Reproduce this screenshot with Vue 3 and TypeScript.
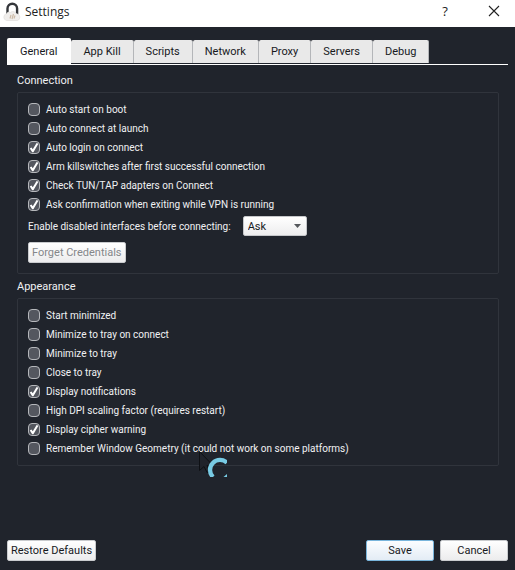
<script setup lang="ts">
import { ref } from 'vue'

interface Option {
  id: string
  label: string
  checked: boolean
}

const tabs = ['General', 'App Kill', 'Scripts', 'Network', 'Proxy', 'Servers', 'Debug']
const activeTab = ref('General')

const connection = ref<Option[]>([
  { id: 'boot', label: 'Auto start on boot', checked: false },
  { id: 'launch', label: 'Auto connect at launch', checked: false },
  { id: 'login', label: 'Auto login on connect', checked: true },
  { id: 'arm', label: 'Arm killswitches after first successful connection', checked: true },
  { id: 'tun', label: 'Check TUN/TAP adapters on Connect', checked: true },
  { id: 'ask', label: 'Ask confirmation when exiting while VPN is running', checked: true },
])

const appearance = ref<Option[]>([
  { id: 'start-min', label: 'Start minimized', checked: false },
  { id: 'tray-connect', label: 'Minimize to tray on connect', checked: false },
  { id: 'tray', label: 'Minimize to tray', checked: false },
  { id: 'close-tray', label: 'Close to tray', checked: false },
  { id: 'notify', label: 'Display notifications', checked: true },
  { id: 'dpi', label: 'High DPI scaling factor (requires restart)', checked: false },
  { id: 'cipher', label: 'Display cipher warning', checked: true },
  { id: 'geometry', label: 'Remember Window Geometry (it could not work on some platforms)', checked: false },
])

const interfaceMode = ref('Ask')
</script>

<template>
  <div class="window">
    <header class="titlebar">
      <svg class="logo" viewBox="0 0 18 20" aria-hidden="true">
        <path d="M4.500 14V7.500a4.800 4.800 0 0 1 9.600 0V14" fill="none" stroke="#34363a" stroke-width="2.400" />
        <path d="M3.500 19.500a3.500 3.500 0 0 1 0-6.800c.8-1.500 2.600-2 3.800-1.200 2-1.600 5.200-1 6.200 1.300a3.400 3.400 0 0 1 .8 6.700Z" fill="#f0eeec" stroke="#dedcda" stroke-width=".6" />
        <path d="M7 17.500l1-3.500M9 18l1.500-5M11 17.500l1-3" stroke="#cdbba8" stroke-width="1.200" />
      </svg>
      <h1>Settings</h1>
      <button class="caption help" type="button" aria-label="Help">?</button>
      <button class="caption" type="button" aria-label="Close">
        <svg class="cross" viewBox="0 0 12 12"><path d="M1 1l10 10M11 1L1 11" stroke="#222" stroke-width="1.100" /></svg>
      </button>
    </header>

    <main>
      <nav class="tabs" role="tablist">
        <button
          v-for="tab in tabs"
          :key="tab"
          type="button"
          role="tab"
          class="tab"
          :class="{ active: tab === activeTab }"
          :aria-selected="tab === activeTab"
          @click="activeTab = tab"
        >{{ tab }}</button>
      </nav>

      <div class="panel">
        <section>
          <h2>Connection</h2>
          <div class="group">
            <label v-for="o in connection" :key="o.id" class="option">
              <input v-model="o.checked" type="checkbox" />
              <span>{{ o.label }}</span>
            </label>
            <div class="field">
              <label for="mode">Enable disabled interfaces before connecting:</label>
              <div class="combo">
                <select id="mode" v-model="interfaceMode">
                  <option>Ask</option>
                  <option>Enable</option>
                  <option>Ignore</option>
                </select>
                <svg class="arrow" viewBox="0 0 7 4" aria-hidden="true"><path d="M0 0h7L3.500 4Z" fill="#55585c" /></svg>
              </div>
            </div>
            <button class="push" type="button" disabled>Forget Credentials</button>
          </div>
        </section>

        <section>
          <h2>Appearance</h2>
          <div class="group appearance">
            <label v-for="o in appearance" :key="o.id" class="option">
              <input v-model="o.checked" type="checkbox" />
              <span>{{ o.label }}</span>
            </label>
            <svg class="pointer" viewBox="0 0 29 29" aria-hidden="true">
              <path d="M1.500 3.500v19l4.500-4 3 6 3-1-3-6h6Z" fill="#20232b" stroke="#0e1014" />
              <path d="M29 14.800A9.600 9.600 0 1 0 15 29" fill="none" stroke="#78cbe4" stroke-width="4.300" />
              <path d="M25.500 29L29 26V29Z" fill="#78cbe4" />
            </svg>
          </div>
        </section>
      </div>
    </main>

    <footer>
      <button class="push restore" type="button">Restore Defaults</button>
      <button class="push wide save" type="button">Save</button>
      <button class="push wide" type="button">Cancel</button>
    </footer>
  </div>
</template>

<style>
body {
  background: #20242c;
}
</style>

<style scoped>
.window {
  display: flex;
  flex-direction: column;
  box-sizing: border-box;
  min-height: 100vh;
  background: #20242c;
  color: #f0f1f3;
  font-family: Roboto, "Liberation Sans", sans-serif;
  font-size: 10px;
}

button,
select {
  font-family: inherit;
  margin: 0;
}

h1,
h2 {
  margin: 0;
  font-weight: 400;
}

.titlebar {
  display: flex;
  align-items: center;
  height: 27px;
  padding: 0 5px 0 3px;
  background: #fff;
  color: #222;
}

.logo {
  width: 18px;
  height: 20px;
  margin: 0 4px 5px 0;
}

h1 {
  flex: 1;
  padding-bottom: 3px;
  font-family: "Open Sans", sans-serif;
  font-size: 12px;
  line-height: 20px;
}

.caption {
  display: flex;
  align-items: center;
  justify-content: center;
  width: 32px;
  height: 24px;
  margin-bottom: 5px;
  padding: 0;
  border: 0;
  background: none;
  color: #222;
}

.help {
  margin-right: 17px;
  font-family: "Open Sans", sans-serif;
  font-size: 13px;
}

.cross {
  width: 12px;
  height: 12px;
}

main {
  flex: 1;
  padding: 11px 7px 0;
}

.tabs {
  display: flex;
  align-items: flex-end;
  height: 26px;
  border-bottom: 1px solid #fff;
}

.tab {
  height: 23px;
  margin-bottom: 1px;
  padding: 0 12px;
  border: 0;
  border-right: 1px solid #b4b6b9;
  border-radius: 2px 2px 0 0;
  background: #e9e9e9;
  color: #17191d;
  font-size: 11px;
  line-height: 24px;
}

.tab.active {
  height: 26px;
  margin-bottom: 0;
  padding: 0 13px;
  border-right-color: #fff;
  background: #fff;
  line-height: 27px;
}

.panel {
  display: flex;
  flex-direction: column;
  gap: 4px;
  padding: 7px 9px 0 10px;
}

h2 {
  height: 20px;
  font-size: 11px;
  line-height: 18px;
}

.group {
  position: relative;
  padding: 7px 10px 10px;
  border: 1px solid #30343c;
  border-radius: 2px;
}

.appearance {
  padding-bottom: 7px;
}

.option {
  display: flex;
  align-items: center;
  gap: 6px;
  height: 19px;
}

.option input {
  position: relative;
  appearance: none;
  box-sizing: border-box;
  width: 12px;
  height: 13px;
  margin: 0;
  border: 1px solid #b5b7bb;
  border-radius: 4px;
  background: #54575f;
}

.option input:checked::after {
  content: "";
  position: absolute;
  inset: 0;
  background: #fff;
  clip-path: polygon(8% 60%, 24% 50%, 38% 67%, 76% 8%, 94% 16%, 44% 94%, 32% 94%);
}

.field {
  display: flex;
  align-items: center;
  gap: 12px;
  margin: 2px 0 6px;
}

.combo {
  position: relative;
}

select {
  appearance: none;
  box-sizing: border-box;
  width: 64px;
  height: 20px;
  padding: 0 4px;
  border: 1px solid #c5c7ca;
  border-radius: 2px;
  background: linear-gradient(#fff, #ededee);
  color: #17191d;
  font-size: 11px;
}

.arrow {
  position: absolute;
  right: 6px;
  top: 8px;
  width: 7px;
  height: 4px;
}

.push {
  box-sizing: border-box;
  height: 21px;
  padding: 0 3px;
  border: 1px solid #c9cbce;
  border-radius: 2px;
  background: linear-gradient(#fff, #ececed);
  color: #17191d;
  font-size: 11px;
  line-height: 19px;
}

.push:disabled {
  color: #85878a;
  display: block;
}

.pointer {
  position: absolute;
  left: 180px;
  bottom: -12px;
  width: 29px;
  height: 29px;
  overflow: hidden;
}

footer {
  display: flex;
  gap: 6px;
  padding: 0 7px 9px;
}

.restore {
  margin-right: auto;
}

.wide {
  width: 68px;
}

.save {
  border-color: #79b5dc;
  background: linear-gradient(#fbfdff, #e3ecf5);
}
</style>
